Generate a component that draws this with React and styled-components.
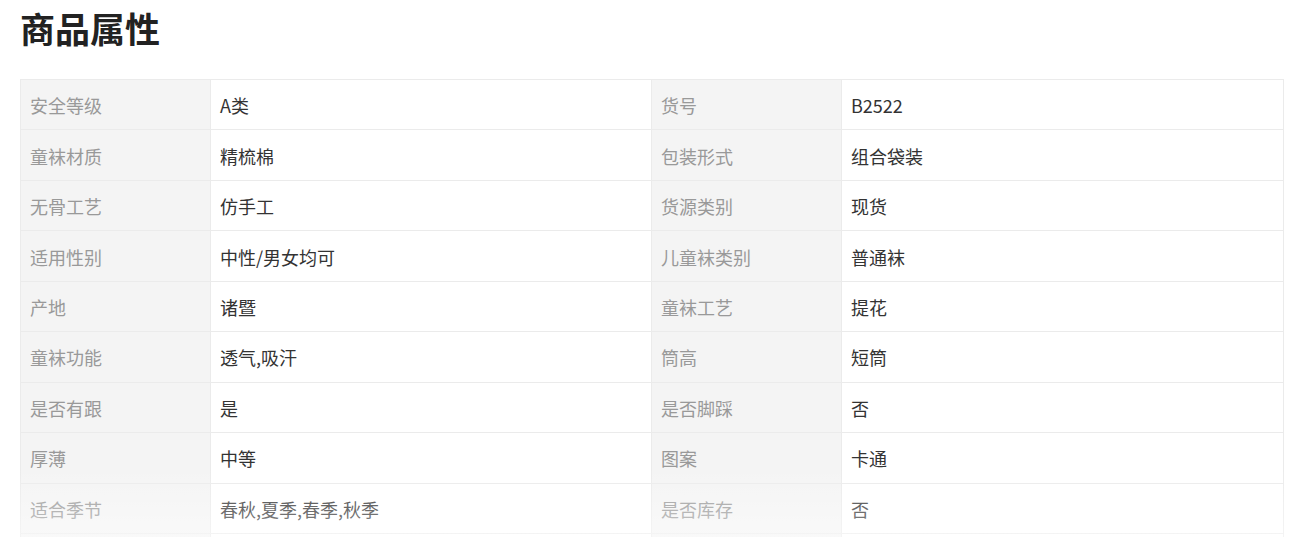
import React from 'react';
import styled, { createGlobalStyle } from 'styled-components';

const GlobalStyle = createGlobalStyle`
    body {
        margin: 0;
        background: #fff;
        font-family: "Noto Sans CJK SC", "Noto Sans", sans-serif;
    }
`;

const Page = styled.div`
    padding: 7px 18px 0 20px;
`;

const Title = styled.h2`
    margin: 0 0 30px;
    font-size: 35px;
    line-height: 42px;
    font-weight: 700;
    color: #222;
`;

const Fold = styled.div`
    position: relative;
    max-height: 458px;
    overflow: hidden;
`;

const Fade = styled.div`
    position: absolute;
    left: 0;
    right: 0;
    bottom: 0;
    height: 70px;
    background: linear-gradient(to bottom, rgba(255,255,255,0), rgba(255,255,255,0.45));
    pointer-events: none;
`;

const Grid = styled.div`
    display: grid;
    grid-template-columns: 190px 441px 190px 1fr;
    grid-auto-rows: 50.44px;
    border-top: 1px solid #ebebeb;
    border-left: 1px solid #ebebeb;
`;

const Cell = styled.div`
    display: flex;
    align-items: center;
    padding: 1px 9px 0;
    font-size: 18px;
    border-right: 1px solid #ebebeb;
    border-bottom: 1px solid #ebebeb;
    background: ${p => (p.$label ? '#f4f4f4' : '#fff')};
    color: ${p => (p.$label ? '#999' : '#333')};
    white-space: nowrap;
`;

const attrs = [
    ['安全等级', 'A类', '货号', 'B2522'],
    ['童袜材质', '精梳棉', '包装形式', '组合袋装'],
    ['无骨工艺', '仿手工', '货源类别', '现货'],
    ['适用性别', '中性/男女均可', '儿童袜类别', '普通袜'],
    ['产地', '诸暨', '童袜工艺', '提花'],
    ['童袜功能', '透气,吸汗', '筒高', '短筒'],
    ['是否有跟', '是', '是否脚踩', '否'],
    ['厚薄', '中等', '图案', '卡通'],
    ['适合季节', '春秋,夏季,春季,秋季', '是否库存', '否'],
    ['', '', '', ''],
];

const App = () => {
    return (
        <Page>
            <GlobalStyle />
            <Title>商品属性</Title>
            <Fold>
                <Grid>
                    {attrs.map((row, i) => (
                        <React.Fragment key={i}>
                            <Cell $label>{row[0]}</Cell>
                            <Cell>{row[1]}</Cell>
                            <Cell $label>{row[2]}</Cell>
                            <Cell>{row[3]}</Cell>
                        </React.Fragment>
                    ))}
                </Grid>
                <Fade />
            </Fold>
        </Page>
    );
};

export default App;
